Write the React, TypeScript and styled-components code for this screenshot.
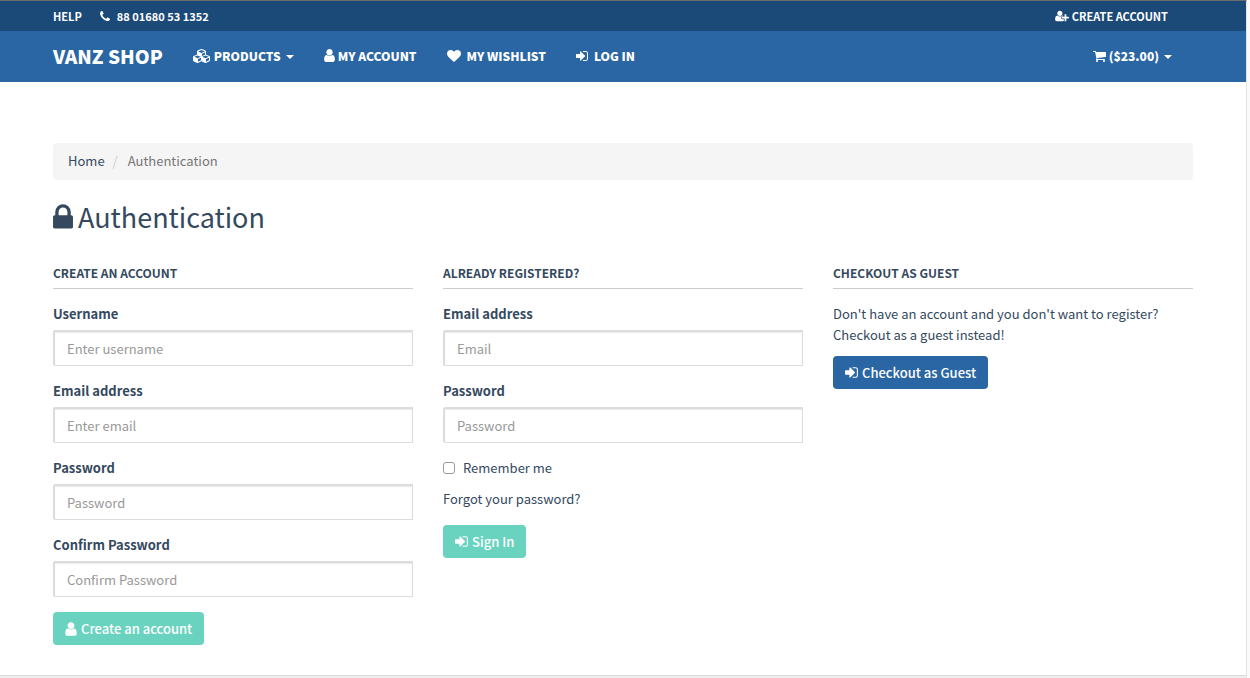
import React from "react";
import styled, { createGlobalStyle } from "styled-components";

const GlobalStyle = createGlobalStyle`
  *, *::before, *::after { box-sizing: border-box; }
  body {
    margin: 0;
    background: #fafafa;
    color: #34495e;
    font-family: "Noto Sans CJK SC", "Noto Sans", sans-serif;
    font-size: 13px;
    line-height: 21px;
  }
  a { color: inherit; text-decoration: none; }
`;

const Frame = styled.div`
  margin-right: 3px;
  border-top: 1px solid #6b6b6b;
  border-right: 1px solid #e4e4e4;
  background: #fff;
`;

const Container = styled.div`
  max-width: 1170px;
  margin: 0 auto;
  padding: 0 15px;
`;

const TopBar = styled.div`
  background: #1c4a78;
  color: #fff;
  font-size: 11px;
  font-weight: 700;
  line-height: 30px;
`;

const TopBarRow = styled(Container)`
  display: flex;
  justify-content: space-between;
`;

const TopLinks = styled.div`
  display: flex;
  gap: 18px;
  padding-right: 25px;
`;

const IconLink = styled.a<{ $gap?: number }>`
  display: inline-flex;
  align-items: center;
  gap: ${({ $gap = 3 }) => $gap}px;
  white-space: nowrap;
`;

const NavBar = styled.nav`
  background: #2a66a3;
  color: #fff;
  font-size: 12px;
  font-weight: 900;
`;

const NavRow = styled(Container)`
  display: flex;
  align-items: center;
  min-height: 51px;
  padding-bottom: 2px;
`;

const Brand = styled.a`
  margin-right: 30px;
  font-size: 19px;
`;

const NavLinks = styled.div`
  display: flex;
  flex: 1;
  gap: 30px;
`;

const CartLink = styled(IconLink)`
  margin-right: 21px;
`;

const Caret = styled.span`
  margin: 3px 0 0 2px;
  border: 4px solid transparent;
  border-top-color: currentColor;
  border-bottom: 0;
`;

const Main = styled.main`
  padding: 61px 0 30px;
  border-bottom: 1px solid #d9d9d9;
`;

const Footer = styled.footer`
  height: 2px;
  background: #eee;
`;

const Breadcrumb = styled.ol`
  display: flex;
  margin: 0 0 20px;
  padding: 7px 15px 9px;
  border-radius: 4px;
  background: #f5f5f5;
  list-style: none;
`;

const Crumb = styled.li`
  &[aria-current] { color: #777; }
  & + &::before {
    content: "/";
    padding: 0 10px 0 8px;
    color: #ccc;
  }
`;

const Title = styled.h1`
  display: flex;
  align-items: center;
  gap: 5px;
  margin: 0 0 26px;
  padding-bottom: 2px;
  font-size: 27px;
  font-weight: 400;
  line-height: 34px;
`;

const Columns = styled.div`
  display: grid;
  grid-template-columns: repeat(3, minmax(0, 1fr));
  gap: 30px;
`;

const SectionTitle = styled.h2`
  margin: 0 0 14px;
  padding-bottom: 5px;
  border-bottom: 1px solid #ccc;
  font-size: 12px;
  font-weight: 700;
  line-height: 21px;
  text-transform: uppercase;
`;

const FieldGroup = styled.div`
  margin-bottom: 14px;
`;

const Label = styled.label`
  display: block;
  margin-bottom: 6px;
  font-weight: 700;
`;

const Input = styled.input`
  display: block;
  width: 100%;
  height: 36px;
  padding: 6px 12px;
  border: 1px solid #dcdcdc;
  border-top-width: 2px;
  border-left-width: 2px;
  border-radius: 2px 0 0 2px;
  background: #fff;
  box-shadow: inset 0 1px 1px rgba(0, 0, 0, 0.08);
  color: inherit;
  font: inherit;
  &::placeholder { color: #999; opacity: 1; }
`;

const CheckLabel = styled.label`
  display: flex;
  align-items: center;
  gap: 8px;
  margin-bottom: 10px;
`;

const Checkbox = styled.input`
  appearance: none;
  width: 12px;
  height: 12px;
  margin: 0;
  border: 1px solid #9a9a9a;
  border-radius: 3px;
  background: #fff;
  &:checked { background: #2a66a3; }
`;

const Paragraph = styled.p<{ $space: number }>`
  margin: 0 0 ${({ $space }) => $space}px;
`;

const Button = styled.button<{ $tone: "primary" | "success" }>`
  display: inline-flex;
  align-items: center;
  gap: 4px;
  height: 33px;
  margin-top: 1px;
  padding: 0 12px;
  border: 0;
  border-radius: 4px;
  background: ${({ $tone }) => ($tone === "primary" ? "#2a66a3" : "#6ad3bf")};
  color: #fff;
  font: inherit;
  font-weight: 500;
  white-space: nowrap;
  cursor: pointer;
`;

const Svg = styled.svg`
  display: block;
  flex: none;
  fill: currentColor;
`;

/* Each entry: view box (x, y, width, height) and outline, 1792 units to the em. */
const icons = {
  user: ["256 0 1280 1792", "M1536 1399q0 109-62.5 187t-150.5 78h-854q-88 0-150.5-78t-62.5-187q0-85 8.5-160.5t31.5-152 58.5-131 94-89 134.5-34.5q131 128 313 128t313-128q76 0 134.5 34.5t94 89 58.5 131 31.5 152 8.5 160.5zm-256-887q0 159-112.5 271.5t-271.5 112.5-271.5-112.5-112.5-271.5 112.5-271.5 271.5-112.5 271.5 112.5 112.5 271.5z"],
  signIn: ["128 0 1536 1792", "M1312 896q0 26-19 45l-544 544q-19 19-45 19t-45-19-19-45v-288h-448q-26 0-45-19t-19-45v-384q0-26 19-45t45-19h448v-288q0-26 19-45t45-19 45 19l544 544q19 19 19 45zm352-352v704q0 119-84.5 203.5t-203.5 84.5h-320q-13 0-22.5-9.5t-9.5-22.5q0-4-1-20t-.5-26.5 3-23.5 10-19.5 20.5-6.5h320q66 0 113-47t47-113v-704q0-66-47-113t-113-47h-312l-11.5-1-11.5-3-8-5.5-7-9-2-13.5q0-4-1-20t-.5-26.5 3-23.5 10-19.5 20.5-6.5h320q119 0 203.5 84.5t84.5 203.5z"],
  heart: ["0 0 1792 1792", "M896 1664q-26 0-44-18l-624-602q-10-8-27.5-26t-55.5-65.5-68-97.5-53.5-121-23.5-138q0-220 127-344t351-124q62 0 126.5 21.5t120 58 95.5 68.5 76 68q36-36 76-68t95.5-68.5 120-58 126.5-21.5q224 0 351 124t127 344q0 221-229 450l-623 600q-18 18-44 18z"],
  lock: ["320 0 1152 1792", "M640 768h512v-192q0-106-75-181t-181-75-181 75-75 181v192zm832 96v576q0 40-28 68t-68 28h-960q-40 0-68-28t-28-68v-576q0-40 28-68t68-28h32v-192q0-184 132-316t316-132 316 132 132 316v192h32q40 0 68 28t28 68z"],
  cart: ["64 0 1664 1792", "M704 1536q0 52-38 90t-90 38-90-38-38-90 38-90 90-38 90 38 38 90zm896 0q0 52-38 90t-90 38-90-38-38-90 38-90 90-38 90 38 38 90zm128-1088v512q0 24-16.5 42.5t-40.5 21.5l-1044 122q13 60 13 70 0 16-24 64h920q26 0 45 19t19 45-19 45-45 19h-1024q-26 0-45-19t-19-45q0-11 8-31.5t16-36 21.5-40 15.5-29.5l-177-823h-204q-26 0-45-19t-19-45 19-45 45-19h256q16 0 28.5 6.5t19.5 15.5 13 24.5 8 26 5.5 29.5 4.5 26h1201q26 0 45 19t19 45z"],
  phone: ["192 0 1408 1792", "M1600 1240q0 27-10 70.5t-21 68.5q-21 50-122 106-94 51-186 51-27 0-53-3.5t-57.5-12.5-47-14.5-55.5-20.5-49-18q-98-35-175-83-127-79-264-216t-216-264q-48-77-83-175-3-9-18-49t-20.5-55.5-14.5-47-12.5-57.5-3.5-53q0-92 51-186 56-101 106-122 25-11 68.5-21t70.5-10q14 0 21 3 18 6 53 76 11 19 30 54t35 63.5 31 53.5q3 4 17.5 25t21.5 35.5 7 28.5q0 20-28.5 50t-62 55-62 53-28.5 46q0 9 5 22.5t8.5 20.5 14 24 11.5 19q76 137 174 235t235 174q2 1 19 11.5t24 14 20.5 8.5 22.5 5q18 0 46-28.5t53-62 55-62 50-28.5q14 0 28.5 7t35.5 21.5 25 17.5q25 15 53.5 31t63.5 35 54 30q70 35 76 53 3 7 3 21z"],
  userPlus: ["0 0 2048 1792", "M704 896q-159 0-271.5-112.5t-112.5-271.5 112.5-271.5 271.5-112.5 271.5 112.5 112.5 271.5-112.5 271.5-271.5 112.5zm960 128h352q13 0 22.5 9.5t9.5 22.5v192q0 13-9.5 22.5t-22.5 9.5h-352v352q0 13-9.5 22.5t-22.5 9.5h-192q-13 0-22.5-9.5t-9.5-22.5v-352h-352q-13 0-22.5-9.5t-9.5-22.5v-192q0-13 9.5-22.5t22.5-9.5h352v-352q0-13 9.5-22.5t22.5-9.5h192q13 0 22.5 9.5t9.5 22.5v352zm-736 224q0 52 38 90t90 38h256v238q-68 50-171 50h-874q-121 0-194-69t-73-190q0-53 3.5-103.5t14-109 26.5-108.5 43-97.5 62-81 85.5-53.5 111.5-20q19 0 39 17 79 61 154.5 91.5t164.5 30.5 164.5-30.5 154.5-91.5q20-17 39-17 132 0 217 96h-223q-52 0-90 38t-38 90v192z"],
  cubes: ["0 0 2304 1792", "M640 1632l384-192v-314l-384 164v342zm-64-454l404-173-404-173-404 173zm1088 454l384-192v-314l-384 164v342zm-64-454l404-173-404-173-404 173zm-448-293l384-165v-266l-384 164v267zm-64-379l441-189-441-189-441 189zm1088 518v416q0 36-19 67t-52 47l-448 224q-25 14-57 14t-57-14l-448-224q-4-2-7-4-2 2-7 4l-448 224q-25 14-57 14t-57-14l-448-224q-33-16-52-47t-19-67v-416q0-38 21.5-70t56.5-48l434-186v-400q0-38 21.5-70t56.5-48l448-192q23-10 50-10t50 10l448 192q35 16 56.5 48t21.5 70v400l434 186q36 16 57 48t21 70z"],
} as const;

function Icon({ name, width, height }: { name: keyof typeof icons; width: number; height: number }) {
  const [viewBox, d] = icons[name];
  return (
    <Svg viewBox={viewBox} width={width} height={height} aria-hidden="true">
      <path d={d} />
    </Svg>
  );
}

function Field({ id, label, type = "text", placeholder }: { id: string; label: string; type?: string; placeholder: string }) {
  return (
    <FieldGroup>
      <Label htmlFor={id}>{label}</Label>
      <Input id={id} type={type} placeholder={placeholder} />
    </FieldGroup>
  );
}

export default function App() {
  return (
    <>
      <GlobalStyle />
      <Frame>
        <TopBar>
          <TopBarRow>
            <TopLinks>
              <a href="#help">HELP</a>
              <IconLink href="tel:8801680531352" $gap={7}>
                <Icon name="phone" width={10} height={13} />
                88 01680 53 1352
              </IconLink>
            </TopLinks>
            <TopLinks>
              <IconLink href="#register">
                <Icon name="userPlus" width={14} height={12} />
                CREATE ACCOUNT
              </IconLink>
            </TopLinks>
          </TopBarRow>
        </TopBar>
        <NavBar>
          <NavRow>
            <Brand href="#home">VANZ SHOP</Brand>
            <NavLinks>
              <IconLink href="#products">
                <Icon name="cubes" width={18} height={14} />
                PRODUCTS <Caret />
              </IconLink>
              <IconLink href="#account">
                <Icon name="user" width={11} height={15} />
                MY ACCOUNT
              </IconLink>
              <IconLink href="#wishlist" $gap={6}>
                <Icon name="heart" width={14} height={14} />
                MY WISHLIST
              </IconLink>
              <IconLink href="#login" $gap={6}>
                <Icon name="signIn" width={12} height={14} />
                LOG IN
              </IconLink>
            </NavLinks>
            <CartLink href="#cart">
              <Icon name="cart" width={13} height={14} />
              ($23.00) <Caret />
            </CartLink>
          </NavRow>
        </NavBar>
        <Main>
          <Container>
            <Breadcrumb>
              <Crumb><a href="#home">Home</a></Crumb>
              <Crumb aria-current="page">Authentication</Crumb>
            </Breadcrumb>
            <Title>
              <Icon name="lock" width={20} height={31} />
              Authentication
            </Title>
            <Columns>
              <section>
                <SectionTitle>Create an account</SectionTitle>
                <Field id="username" label="Username" placeholder="Enter username" />
                <Field id="new-email" label="Email address" type="email" placeholder="Enter email" />
                <Field id="new-password" label="Password" type="password" placeholder="Password" />
                <Field id="confirm-password" label="Confirm Password" type="password" placeholder="Confirm Password" />
                <Button $tone="success" type="button">
                  <Icon name="user" width={12} height={16} />
                  Create an account
                </Button>
              </section>
              <section>
                <SectionTitle>Already registered?</SectionTitle>
                <Field id="email" label="Email address" type="email" placeholder="Email" />
                <Field id="password" label="Password" type="password" placeholder="Password" />
                <CheckLabel>
                  <Checkbox type="checkbox" />
                  Remember me
                </CheckLabel>
                <Paragraph $space={15}><a href="#forgot">Forgot your password?</a></Paragraph>
                <Button $tone="success" type="button">
                  <Icon name="signIn" width={13} height={15} />
                  Sign In
                </Button>
              </section>
              <section>
                <SectionTitle>Checkout as guest</SectionTitle>
                <Paragraph $space={10}>
                  Don't have an account and you don't want to register? Checkout as a guest instead!
                </Paragraph>
                <Button $tone="primary" type="button">
                  <Icon name="signIn" width={13} height={15} />
                  Checkout as Guest
                </Button>
              </section>
            </Columns>
          </Container>
        </Main>
        <Footer />
      </Frame>
    </>
  );
}
